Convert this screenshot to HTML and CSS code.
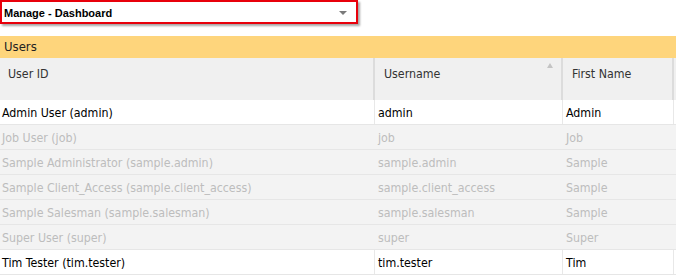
FILE: index.html
```html
<!DOCTYPE html>
<html>
<head>
<meta charset="utf-8">
<link rel="stylesheet" href="styles.css">
</head>
<body>
<div class="picker">
  <span class="picker-label">Manage - Dashboard</span>
  <span class="picker-arrow"></span>
</div>
<div class="panel">
  <div class="panel-title">Users</div>
  <div class="grid">
    <div class="row head">
      <div class="cell">User ID</div>
      <div class="cell sorted">Username<span class="sort"></span></div>
      <div class="cell">First Name</div>
      <div class="cell end"></div>
    </div>
    <div class="row">
      <div class="cell">Admin User (admin)</div>
      <div class="cell">admin</div>
      <div class="cell">Admin</div>
      <div class="cell end"></div>
    </div>
    <div class="row off">
      <div class="cell">Job User (job)</div>
      <div class="cell">job</div>
      <div class="cell">Job</div>
      <div class="cell end"></div>
    </div>
    <div class="row off">
      <div class="cell">Sample Administrator (sample.admin)</div>
      <div class="cell">sample.admin</div>
      <div class="cell">Sample</div>
      <div class="cell end"></div>
    </div>
    <div class="row off">
      <div class="cell">Sample Client_Access (sample.client_access)</div>
      <div class="cell">sample.client_access</div>
      <div class="cell">Sample</div>
      <div class="cell end"></div>
    </div>
    <div class="row off">
      <div class="cell">Sample Salesman (sample.salesman)</div>
      <div class="cell">sample.salesman</div>
      <div class="cell">Sample</div>
      <div class="cell end"></div>
    </div>
    <div class="row off">
      <div class="cell">Super User (super)</div>
      <div class="cell">super</div>
      <div class="cell">Super</div>
      <div class="cell end"></div>
    </div>
    <div class="row">
      <div class="cell">Tim Tester (tim.tester)</div>
      <div class="cell">tim.tester</div>
      <div class="cell">Tim</div>
      <div class="cell end"></div>
    </div>
  </div>
</div>
</body>
</html>
```

FILE: styles.css
```css
html, body {
  margin: 0;
  padding: 0;
  background: #fff;
}
body {
  width: 676px;
  height: 276px;
  overflow: hidden;
  font-family: "DejaVu Sans", Verdana, sans-serif;
  font-stretch: condensed;
  font-size: 12px;
  color: #000;
}
.picker {
  box-sizing: border-box;
  width: 358px;
  height: 24px;
  border: 2px solid #e8000b;
  box-shadow: 2px 2px 2px rgba(0,0,0,0.35);
  background: #fff;
  display: flex;
  align-items: center;
  justify-content: space-between;
  padding: 1px 9px 0 2px;
}
.picker-label {
  font-family: "Liberation Sans", Arial, sans-serif;
  font-stretch: normal;
  font-weight: bold;
  font-size: 11px;
  color: #000;
}
.picker-arrow {
  width: 0;
  height: 0;
  border-left: 4px solid transparent;
  border-right: 4px solid transparent;
  border-top: 4px solid #7a7a7a;
  margin-top: 1px;
}
.panel {
  margin-top: 12px;
}
.panel-title {
  height: 22px;
  line-height: 21px;
  background: #fed57c;
  padding-left: 4px;
  font-size: 13px;
  color: #222;
}
.row {
  display: grid;
  grid-template-columns: 375px 188px 111px 2px;
  height: 25px;
  box-sizing: border-box;
  border-bottom: 1px solid #e6e6e6;
  background: #fff;
}
.cell {
  box-sizing: border-box;
  border-right: 1px solid #e8e8e8;
  padding: 1px 0 0 2px;
  line-height: 24px;
  white-space: nowrap;
  overflow: hidden;
  font-size: 12.3px;
}
.cell:nth-child(2) { padding-left: 3px; }
.cell:nth-child(3) { padding-left: 3px; }
.cell.end { border-right: none; }
.row.off {
  background: #f3f3f3;
  color: #bdbdbd;
}
.row.off .cell {
  border-right-color: #f3f3f3;
}
.row.head {
  height: 42px;
  background: #f0f0f0;
  border-bottom: none;
  color: #333;
}
.row.head .cell {
  border-right: 2px solid #dcdcdc;
  line-height: 16px;
  padding: 8px 0 0 8px;
  position: relative;
}
.row.head .cell:nth-child(2),
.row.head .cell:nth-child(3) { padding-left: 9px; }
.row.head .cell.end { border-right: none; }
.sort {
  position: absolute;
  top: 5px;
  right: 8px;
  width: 0;
  height: 0;
  border-left: 3px solid transparent;
  border-right: 3px solid transparent;
  border-bottom: 5px solid #c4c4c4;
}
```
